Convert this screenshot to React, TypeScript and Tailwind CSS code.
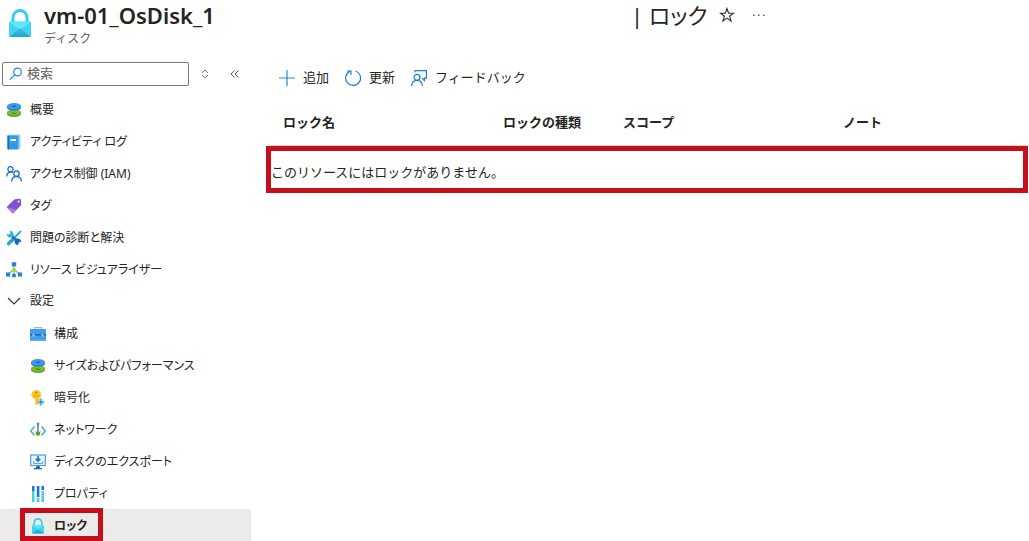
import React, { type FC, type ReactNode } from 'react'

interface IMenuItem {
    label: string
    icon: ReactNode
    selected?: boolean
}

interface IColumn {
    label: string
    width: string
}

const LockIcon: FC<{ className: string, id: string }> = ({ className, id }) => (
    <svg className={className} viewBox="0 0 22 29" preserveAspectRatio="none" aria-hidden="true">
        <defs>
            <linearGradient id={id} x1="0" y1="0" x2="0" y2="1">
                <stop offset="0" stopColor="#35c5ea" />
                <stop offset="1" stopColor="#22a5cf" />
            </linearGradient>
        </defs>
        <path d="M4 14V8.500a7 7 0 0 1 14 0V14" fill="none" stroke="#32d0f0" strokeWidth="3" />
        <rect x="0" y="12.500" width="22" height="15.500" rx="1" fill="#3fd3f5" />
        <path d="M0.500 13 11 21 21.500 13Z" fill="#5ee6fd" />
        <path d="M0.500 28 11 19 21.500 28Z" fill={`url(#${id})`} />
    </svg>
)

const DisksIcon = () => (
    <svg className="size-4 shrink-0" viewBox="0 0 16 16" aria-hidden="true">
        <path d="M1 11v1c0 1.600 3 2.900 7 2.900s7-1.300 7-2.900v-1z" fill="#5c9f20" />
        <ellipse cx="8" cy="10.600" rx="7" ry="3.200" fill="#76bc2d" />
        <path d="M1 4.500V5.500c0 1.700 3 3 7 3s7-1.300 7-3v-1z" fill="#1a6fc4" />
        <ellipse cx="8" cy="4.300" rx="7" ry="3.300" fill="#3b97ee" />
        <ellipse cx="8" cy="4.300" rx="2.200" ry="0.700" fill="#1358a3" />
        <path d="M5.800 11.300h4.400" stroke="#457f16" strokeWidth="0.900" />
    </svg>
)

const LogIcon = () => (
    <svg className="size-4 shrink-0" viewBox="0 0 16 16" aria-hidden="true">
        <path d="M3 0.500h11.500v14H3z" fill="#a9cfe6" />
        <path d="M1.500 1.500h11v14h-10a1 1 0 0 1-1-1z" fill="#2d9de2" />
        <path d="M1.500 1.500h1.500v14h-.500a1 1 0 0 1-1-1z" fill="#0f70b5" />
        <path d="M4.500 5h5.500v2H4.500z" fill="#fff" />
    </svg>
)

const PeopleIcon = () => (
    <svg className="size-4 shrink-0" viewBox="0 0 16 16" fill="none" stroke="#1f72d2" strokeWidth="1.300" aria-hidden="true">
        <circle cx="4.500" cy="3.200" r="2.600" />
        <path d="M0.700 10.500C.900 7.800 2.400 6 4.600 6c1 0 1.900.300 2.500.900" />
        <circle cx="10.500" cy="7.700" r="2.700" />
        <path d="M5.500 15.500c.300-3.200 2.200-5 5-5s4.700 1.800 5 5" />
    </svg>
)

const TagIcon = () => (
    <svg className="size-4 shrink-0" viewBox="0 0 16 16" aria-hidden="true">
        <path d="M9 1.200 13.700.800a1.200 1.200 0 0 1 1.200 1l.300 4.700a1.400 1.400 0 0 1-.400 1L7.500 15a1 1 0 0 1-1.400 0L1.200 9.800a1 1 0 0 1 0-1.400L8 1.700a1.500 1.500 0 0 1 1-.500z" fill="#8350d0" />
        <path d="M1 9.200 6.200 15a1 1 0 0 0 1.300 0l3.500-3.600z" fill="#a87be6" />
        <circle cx="12.600" cy="3.500" r="1.100" fill="#f1e8ff" />
    </svg>
)

const ToolsIcon = () => (
    <svg className="size-4 shrink-0" viewBox="0 0 16 16" fill="none" aria-hidden="true">
        <path d="M14.500 1.500 8.500 7.800" stroke="#29b5dc" strokeWidth="2" strokeLinecap="round" />
        <path d="M7.500 8.700 2.600 13.600" stroke="#1ba3d6" strokeWidth="3.400" strokeLinecap="round" />
        <path d="m4.500 4.500 8.500 8.500" stroke="#1879c4" strokeWidth="2.700" />
        <path d="M.800 4 3 4.500 4.400 3.200 3.800.800a3.600 3.600 0 0 1 3.600 4.700L5.500 7.400A3.600 3.600 0 0 1 .800 4z" fill="#2cb7df" />
        <path d="m15.300 12-2.200-.500-1.400 1.300.600 2.400a3.600 3.600 0 0 1-3.600-4.700l1.900-1.900a3.600 3.600 0 0 1 4.700 3.400z" fill="#1668b8" />
    </svg>
)

const VisualizerIcon = () => (
    <svg className="size-4 shrink-0" viewBox="0 0 16 16" aria-hidden="true">
        <path d="M8 4v9M8 7.500 2.300 12M8 7.500l5.700 4.500" fill="none" stroke="#86c540" strokeWidth="1.300" />
        <circle cx="8" cy="8" r="2.100" fill="#9bd64f" />
        <path d="M5.800.300h4.400v4H5.800zM0 10.500h4.200v4H0zM11.800 10.500H16v4h-4.200zM6.200 11.800h3.600v3.400H6.200z" fill="#2a7fdc" />
    </svg>
)

const BriefcaseIcon = () => (
    <svg className="size-4 shrink-0" viewBox="0 0 16 16" aria-hidden="true">
        <path d="M4.500 3V1.600h7V3" fill="none" stroke="#b5b5b5" strokeWidth="1.200" />
        <rect x="0" y="3" width="16" height="12" rx="0.800" fill="#3f9cf0" />
        <path d="M0 8h16v1.500H0z" fill="#1667b7" />
        <path d="M0 13.500h16V15H0z" fill="#61aff2" />
        <path d="M2.500 8h2v2.500h-2zM11.500 8h2v2.500h-2z" fill="#8fd2fb" />
    </svg>
)

const KeyIcon = () => (
    <svg className="size-4 shrink-0" viewBox="0 0 16 16" aria-hidden="true">
        <path d="M6.300.300c2.800 0 5 1.900 5 4.500 0 1.800-1 3.300-2.500 4v4.700L7 15.500l-2.200-2 .800-1.200-1-1 1-1.200-1-1.200C2.600 8.300 1.400 6.700 1.400 4.800c0-2.600 2.200-4.500 4.900-4.500z" fill="#fbc926" />
        <circle cx="6.300" cy="2.600" r="1.200" fill="#d08c00" />
        <path d="M3.500 5.800h5.600" stroke="#e0a010" />
        <path d="m10.800 8 4 4-4 4-4-4z" fill="#6fbcdc" />
        <path d="m8.800 10 4 4M12.800 10l-4 4" stroke="#fff" strokeWidth="0.700" />
        <circle cx="10.800" cy="12" r="1.200" fill="#2b84bd" />
    </svg>
)

const NetworkIcon = () => (
    <svg className="size-4 shrink-0" viewBox="0 0 16 16" fill="none" aria-hidden="true">
        <path d="M4.500 4.500.800 9l3.700 4.500M11.500 4.500 15.200 9l-3.700 4.500" stroke="#45aed6" strokeWidth="1.500" />
        <path d="M8 2.500V11" stroke="#4b4f52" strokeWidth="1.200" />
        <circle cx="8" cy="2" r="1.400" fill="#2d9bbf" />
        <path d="M5 9.500 8 12l3-2.500" stroke="#8abf65" />
        <circle cx="8" cy="11.500" r="2.200" fill="#57a51a" />
    </svg>
)

const ExportIcon = () => (
    <svg className="size-4 shrink-0" viewBox="0 0 16 16" fill="none" aria-hidden="true">
        <rect x="0.700" y="1" width="14.600" height="10.500" fill="#eaf5fd" stroke="#4c9edb" strokeWidth="1.200" />
        <path d="M8 2v5M5.700 4.700 8 7 10.300 4.700" stroke="#1b7fd0" strokeWidth="1.700" />
        <path d="M3.500 7v2.500h9V7" stroke="#65a9dc" />
        <path d="M6.500 12h3l.500 2h2v1.300H4V14h2z" fill="#175fa8" />
    </svg>
)

const PropertiesIcon = () => (
    <svg className="size-4 shrink-0" viewBox="0 0 16 16" aria-hidden="true">
        <path d="M2 0h2.500v5H2zM6.800 0h2.600v11H6.800zM11.500 0H14v4h-2.500z" fill="#1876cf" />
        <path d="M2 5h2.500v11H2zM6.800 12h2.600v4H6.800zM11.500 5H14v11h-2.500z" fill="#45cdf0" />
    </svg>
)

const menuItems: IMenuItem[] = [
    { label: '概要', icon: <DisksIcon /> },
    { label: 'アクティビティ ログ', icon: <LogIcon /> },
    { label: 'アクセス制御 (IAM)', icon: <PeopleIcon /> },
    { label: 'タグ', icon: <TagIcon /> },
    { label: '問題の診断と解決', icon: <ToolsIcon /> },
    { label: 'リソース ビジュアライザー', icon: <VisualizerIcon /> }
]

const settingItems: IMenuItem[] = [
    { label: '構成', icon: <BriefcaseIcon /> },
    { label: 'サイズおよびパフォーマンス', icon: <DisksIcon /> },
    { label: '暗号化', icon: <KeyIcon /> },
    { label: 'ネットワーク', icon: <NetworkIcon /> },
    { label: 'ディスクのエクスポート', icon: <ExportIcon /> },
    { label: 'プロパティ', icon: <PropertiesIcon /> },
    { label: 'ロック', icon: <LockIcon className="h-4 w-3 mx-0.5 shrink-0" id="lock-small" />, selected: true }
]

const columns: IColumn[] = [
    { label: 'ロック名', width: 'w-[220px]' },
    { label: 'ロックの種類', width: 'w-[120px]' },
    { label: 'スコープ', width: 'w-[220px]' },
    { label: 'ノート', width: '' }
]

const Header = () => (
    <header className="flex h-[62px] items-start pl-2">
        <LockIcon className="mt-[9px] ml-px h-[29px] w-[22px] shrink-0" id="lock-large" />
        <div className="ml-[13px] w-[587px] shrink-0">
            <h1 className="whitespace-nowrap text-[22px] leading-[30px] font-semibold">vm-01_OsDisk_1</h1>
            <p className="text-[12px] leading-[18px] text-[#605e5c]">ディスク</p>
        </div>
        <h2 className="text-[22px] leading-[30px] whitespace-nowrap [font-feature-settings:'palt']">| ロック</h2>
        <button type="button" aria-label="お気に入り" className="mt-[7px] ml-3">
            <svg className="size-4" viewBox="0 0 16 16" fill="none" stroke="#323130" strokeWidth="1.100" aria-hidden="true">
                <path d="m8 1.500 1.600 4.700h5L10.600 9.200l1.500 4.800L8 11.100 3.900 14l1.500-4.800-4-3h5z" />
            </svg>
        </button>
        <button type="button" aria-label="その他" className="mt-[7px] ml-4">
            <svg className="size-4" viewBox="0 0 16 16" fill="#605e5c" aria-hidden="true">
                <path d="M2 7.500h1.500V9H2zM7 7.500h1.500V9H7zM12 7.500h1.500V9H12z" />
            </svg>
        </button>
    </header>
)

const MenuRow: FC<{ item: IMenuItem, nested?: boolean }> = ({ item, nested }) => (
    <li className={item.selected ? 'relative bg-[#edebe9] font-semibold' : ''}>
        <a href="#" className={`flex h-8 items-center gap-2 pt-0.5 ${nested ? 'pl-[30px]' : 'pl-1.5'}`}>
            {item.icon}
            <span>{item.label}</span>
        </a>
        {item.selected && <span className="pointer-events-none absolute -top-px bottom-0 left-5 w-[83px] border-5 border-[#c50f1b]" />}
    </li>
)

const Sidebar = () => (
    <nav className="w-[251px] shrink-0 text-[12px] [font-feature-settings:'palt']">
        <div className="mb-[7px] flex h-6 items-center pl-0.5">
            <label className="flex h-6 w-[187px] items-center gap-1 rounded-xs border border-[#7a7876] pl-1.5 text-[13px]">
                <svg className="size-3.5 shrink-0" viewBox="0 0 14 14" fill="none" stroke="#2b88d8" strokeWidth="1.200" aria-hidden="true">
                    <circle cx="8.500" cy="5" r="3.900" />
                    <path d="M5.700 7.800.700 12.900" />
                </svg>
                <input type="text" aria-label="検索" placeholder="検索" className="w-full min-w-0 outline-none placeholder:text-[#605e5c]" />
            </label>
            <button type="button" aria-label="並べ替え" className="ml-2.5">
                <svg className="size-3" viewBox="0 0 12 12" fill="none" stroke="#797775" aria-hidden="true">
                    <path d="M3 5 6 2l3 3M3 7l3 3 3-3" />
                </svg>
            </button>
            <button type="button" aria-label="折りたたむ" className="ml-[18px]">
                <svg className="size-3" viewBox="0 0 12 12" fill="none" stroke="#605e5c" aria-hidden="true">
                    <path d="M5.500 2.500 2 6l3.500 3.500M9.500 2.500 6 6l3.500 3.500" />
                </svg>
            </button>
        </div>
        <ul>
            {menuItems.map((item) => <MenuRow key={item.label} item={item} />)}
            <li>
                <button type="button" aria-expanded="true" className="flex h-8 w-full items-center gap-2 pl-1.5">
                    <svg className="size-4 shrink-0" viewBox="0 0 16 16" fill="none" stroke="#323130" strokeWidth="1.100" aria-hidden="true">
                        <path d="m2 5 6 6 6-6" />
                    </svg>
                    <span>設定</span>
                </button>
                <ul>
                    {settingItems.map((item) => <MenuRow key={item.label} item={item} nested />)}
                </ul>
            </li>
        </ul>
    </nav>
)

const Toolbar = () => (
    <div className="flex h-8 items-center gap-4 pl-2 text-[13px]">
        <button type="button" className="flex items-center gap-2">
            <svg className="size-4" viewBox="0 0 16 16" stroke="#2b88d8" strokeWidth="1.200" aria-hidden="true">
                <path d="M8 0v16M0 8h16" />
            </svg>
            追加
        </button>
        <button type="button" className="flex items-center gap-2">
            <svg className="size-4" viewBox="0 0 16 16" fill="none" stroke="#1a7fd4" strokeWidth="1.200" aria-hidden="true">
                <path d="M10.500 1A7.400 7.400 0 1 1 5 1.300" />
                <path d="M2 1h4v4" />
            </svg>
            更新
        </button>
        <button type="button" className="flex items-center gap-2">
            <svg className="size-4" viewBox="0 0 16 16" fill="none" stroke="#1a7fd4" strokeWidth="1.200" aria-hidden="true">
                <path d="M4 2.500V.600h11.400v7.500h-2v2.500L11 8.100" />
                <circle cx="6" cy="7.300" r="3" />
                <path d="M.600 16c.300-3.500 2.400-5.700 5.400-5.700s5.100 2.200 5.400 5.700" />
            </svg>
            フィードバック
        </button>
    </div>
)

const LockTable = () => (
    <table className="mt-[7px] w-full table-fixed text-left text-[13px]">
        <thead>
            <tr className="h-11 border-b border-[#d6d4d2]">
                {columns.map((column) => (
                    <th key={column.label} scope="col" className={`pl-3 font-bold ${column.width}`}>{column.label}</th>
                ))}
            </tr>
        </thead>
        <tbody>
            <tr>
                <td colSpan={columns.length}>
                    <div className="mr-px -ml-[5px] flex h-[47px] items-center border-5 border-[#c50f1b] pt-2">
                        このリソースにはロックがありません。
                    </div>
                </td>
            </tr>
        </tbody>
    </table>
)

const App = () => {
    return (
        <div className="min-h-screen overflow-hidden bg-white font-['Noto_Sans','Noto_Sans_CJK_JP',sans-serif] text-[#252423]">
            <Header />
            <div className="flex">
                <Sidebar />
                <main className="min-w-0 flex-1 pl-5">
                    <Toolbar />
                    <LockTable />
                </main>
            </div>
        </div>
    )
}

export default App
